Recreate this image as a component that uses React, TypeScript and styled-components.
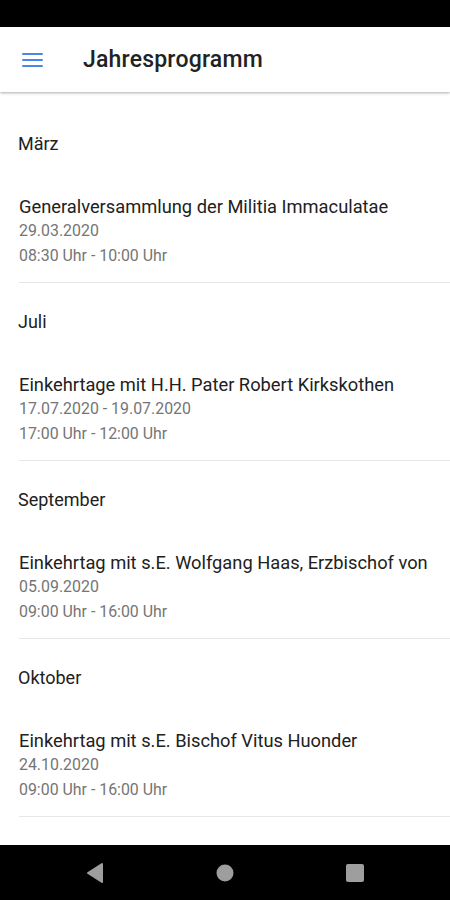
import React from "react";
import styled, { createGlobalStyle } from "styled-components";

const GlobalStyle = createGlobalStyle`
  html, body { margin: 0; padding: 0; background: #ffffff; }
  body { font-family: Roboto, "Noto Sans", Arial, sans-serif; -webkit-font-smoothing: antialiased; }
  * { box-sizing: border-box; }
`;

const Screen = styled.div`
  width: 450px;
  height: 900px;
  display: flex;
  flex-direction: column;
  background: #ffffff;
  overflow: hidden;
`;

const StatusBar = styled.div`
  height: 27px;
  flex: none;
  background: #000000;
`;

const AppBar = styled.header`
  position: relative;
  z-index: 1;
  height: 65px;
  flex: none;
  display: flex;
  align-items: center;
  background: #ffffff;
  box-shadow: 0 1px 2px rgba(0, 0, 0, 0.22), 0 2px 3px rgba(0, 0, 0, 0.08);
`;

const MenuButton = styled.button`
  width: 21px;
  height: 14px;
  margin-left: 22px;
  padding: 0;
  border: 0;
  background: transparent;
  display: flex;
  flex-direction: column;
  justify-content: space-between;
`;

const MenuLine = styled.span`
  display: block;
  height: 2px;
  width: 100%;
  background: #4a86e8;
  border-radius: 1px;
`;

const Title = styled.h1`
  margin: 0 0 0 40px;
  font-size: 23px;
  font-weight: 500;
  color: #222222;
  letter-spacing: 0.2px;
`;

const Content = styled.main`
  flex: 1;
  overflow: hidden;
  padding-top: 13px;
`;

const Section = styled.section`
  display: flex;
  flex-direction: column;
`;

const MonthHeader = styled.div`
  height: 76px;
  display: flex;
  align-items: center;
  padding-left: 18px;
  font-size: 18px;
  color: #212121;
`;

const Item = styled.div`
  margin-left: 19px;
  padding: 14px 0 14px;
  border-bottom: 1px solid #e6e6e6;
  display: flex;
  flex-direction: column;
`;

const ItemTitle = styled.div`
  height: 24px;
  line-height: 24px;
  font-size: 18.3px;
  color: #212121;
  white-space: nowrap;
  overflow: hidden;
`;

const ItemMeta = styled.div`
  height: 24px;
  line-height: 24px;
  font-size: 15.9px;
  color: #757575;
  & + & { margin-top: 1px; }
`;

const NavBar = styled.nav`
  height: 55px;
  flex: none;
  background: #000000;
  display: grid;
  grid-template-columns: repeat(3, 1fr);
  align-items: center;
  justify-items: center;
  padding: 0 30px;
`;

const NavIcon = styled.svg`
  display: block;
`;

const events = [
  {
    month: "März",
    title: "Generalversammlung der Militia Immaculatae",
    date: "29.03.2020",
    time: "08:30 Uhr - 10:00 Uhr",
  },
  {
    month: "Juli",
    title: "Einkehrtage mit H.H. Pater Robert Kirkskothen",
    date: "17.07.2020 - 19.07.2020",
    time: "17:00 Uhr - 12:00 Uhr",
  },
  {
    month: "September",
    title: "Einkehrtag mit s.E. Wolfgang Haas, Erzbischof von",
    date: "05.09.2020",
    time: "09:00 Uhr - 16:00 Uhr",
  },
  {
    month: "Oktober",
    title: "Einkehrtag mit s.E. Bischof Vitus Huonder",
    date: "24.10.2020",
    time: "09:00 Uhr - 16:00 Uhr",
  },
];

export default function App() {
  return (
    <>
      <GlobalStyle />
      <Screen>
        <StatusBar />
        <AppBar>
          <MenuButton aria-label="Menü">
            <MenuLine />
            <MenuLine />
            <MenuLine />
          </MenuButton>
          <Title>Jahresprogramm</Title>
        </AppBar>
        <Content>
          {events.map((e) => (
            <Section key={e.month}>
              <MonthHeader>{e.month}</MonthHeader>
              <Item>
                <ItemTitle>{e.title}</ItemTitle>
                <ItemMeta>{e.date}</ItemMeta>
                <ItemMeta>{e.time}</ItemMeta>
              </Item>
            </Section>
          ))}
        </Content>
        <NavBar>
          <NavIcon width="18" height="22" viewBox="0 0 18 22">
            <path d="M16 2 L16 20 L2 11 Z" fill="#9e9e9e" stroke="#9e9e9e" strokeWidth="2" strokeLinejoin="round" />
          </NavIcon>
          <NavIcon width="18" height="18" viewBox="0 0 18 18">
            <circle cx="9" cy="9" r="8.5" fill="#9e9e9e" />
          </NavIcon>
          <NavIcon width="18" height="18" viewBox="0 0 18 18">
            <rect x="0" y="0" width="18" height="18" rx="2" fill="#9e9e9e" />
          </NavIcon>
        </NavBar>
      </Screen>
    </>
  );
}
